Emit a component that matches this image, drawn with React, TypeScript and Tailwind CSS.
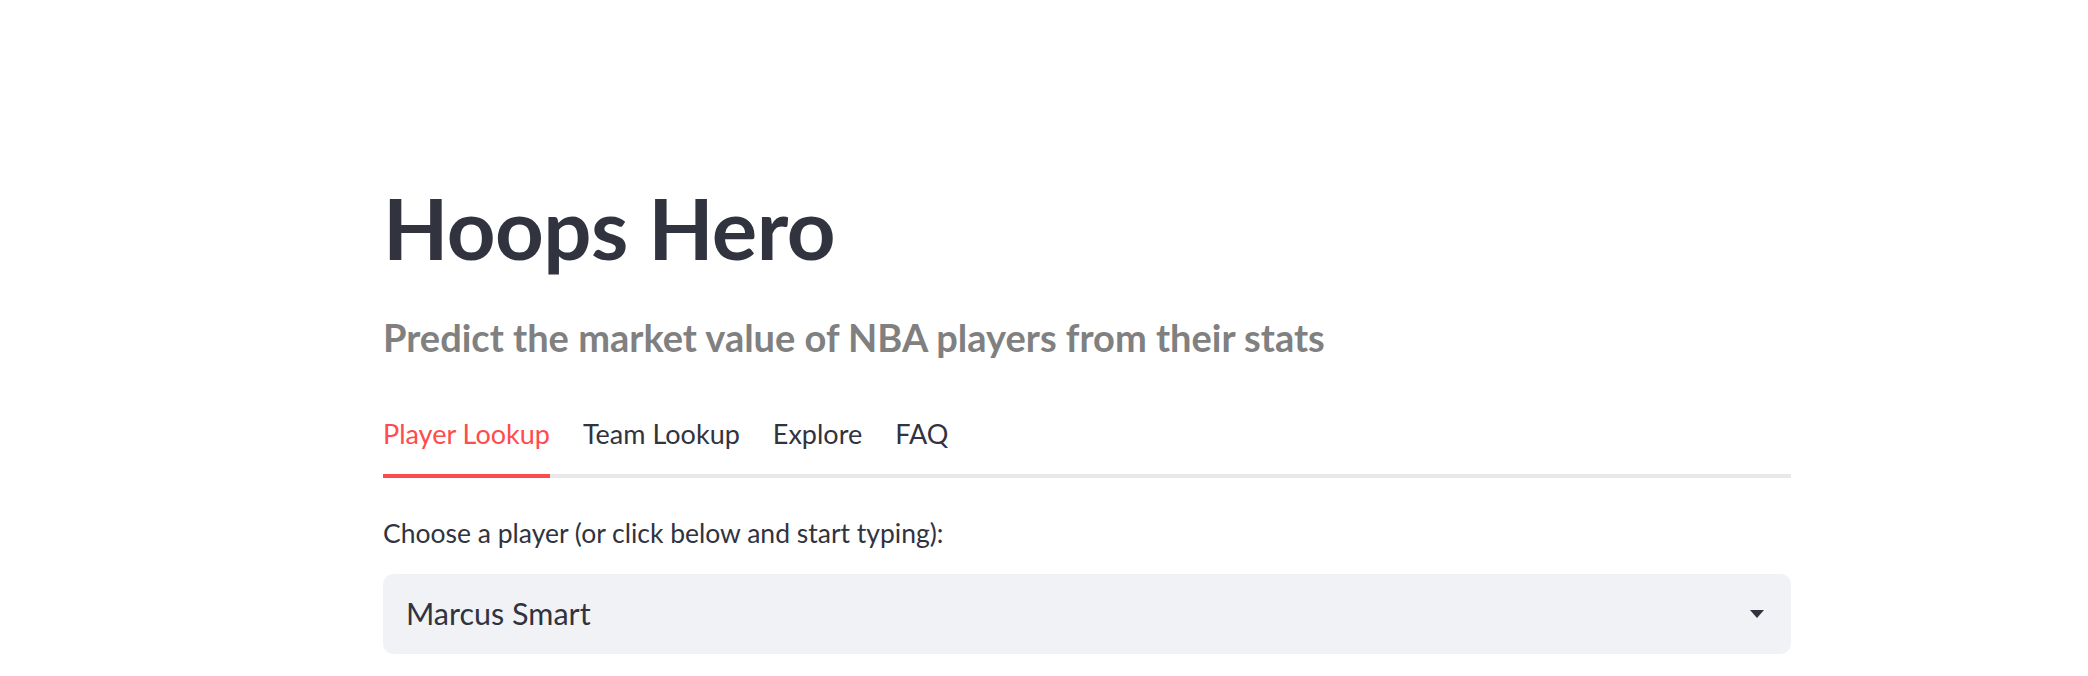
import React from 'react'

const tabs = ['Player Lookup', 'Team Lookup', 'Explore', 'FAQ']

export default function App() {
    const active = 0

    return (
        <div className="min-h-[676px] bg-white font-['Lato',sans-serif] text-[#31333f]">
            <div className="ml-[383px] w-[1408px] pt-[185px]">
                <h1 className="text-[85px] font-bold leading-[85px] tracking-[-0.5px]">Hoops Hero</h1>
                <h3 className="mt-[44px] text-[38px] font-bold leading-[46px] text-[#808080]">
                    Predict the market value of NBA players from their stats
                </h3>
                <div className="mt-[58px] flex gap-[33px] border-b-4 border-[#e8e8e8]">
                    {tabs.map((tab, i) => (
                        <div
                            key={tab}
                            className={
                                i === active
                                    ? '-mb-[4px] border-b-4 border-[#ff4b4b] pb-[24px] text-[27px] leading-[32px] text-[#ff4b4b]'
                                    : 'pb-[24px] text-[27px] leading-[32px]'
                            }
                        >
                            {tab}
                        </div>
                    ))}
                </div>
                <div className="mt-[39px] text-[26.5px] leading-[32px]">Choose a player (or click below and start typing):</div>
                <div className="mt-[25px] flex h-[80px] items-center justify-between rounded-[10px] bg-[#f0f2f6] pl-[23px] pr-[27px]">
                    <span className="text-[30.5px]">Marcus Smart</span>
                    <svg width="14" height="8" viewBox="0 0 14 8">
                        <path d="M0 0h14L7 8z" fill="#31333f" />
                    </svg>
                </div>
            </div>
        </div>
    )
}
